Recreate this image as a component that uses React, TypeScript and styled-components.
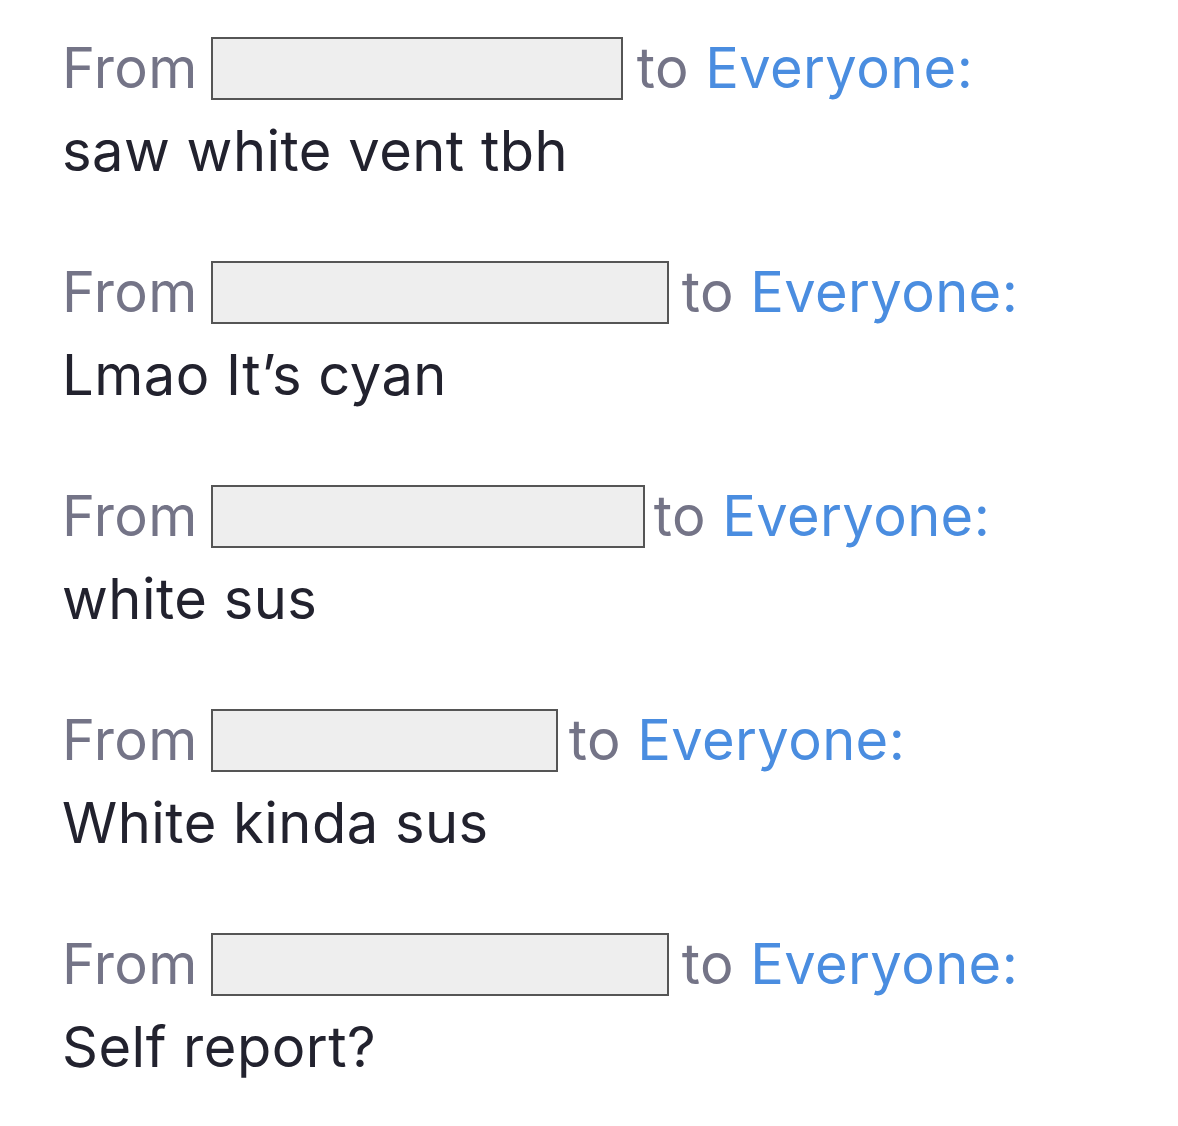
import React from "react";
import styled, { createGlobalStyle } from "styled-components";

const Global = createGlobalStyle`
  html, body { margin: 0; padding: 0; background: #ffffff; }
  body { font-family: Inter, "Noto Sans", "Liberation Sans", sans-serif; }
`;

const Feed = styled.div`
  display: flex;
  flex-direction: column;
  gap: 76px;
  padding: 36px 0 0 62px;
`;

const Message = styled.div`
  display: flex;
  flex-direction: column;
  gap: 18px;
`;

const Header = styled.div`
  display: flex;
  align-items: center;
  height: 64px;
  font-size: 56px;
  line-height: 64px;
  letter-spacing: 0.4px;
  white-space: nowrap;
`;

const From = styled.span`
  color: #747487;
  margin-right: 13px;
`;

const Redacted = styled.span<{ $w: number }>`
  display: inline-block;
  box-sizing: border-box;
  width: ${(p) => p.$w}px;
  height: 63px;
  background: #eeeeee;
  border: 2px solid #555555;
`;

const To = styled.span<{ $gap: number }>`
  color: #747487;
  margin-left: ${(p) => p.$gap}px;
`;

const Everyone = styled.span`
  color: #4a8de0;
`;

const Body = styled.div`
  font-size: 56px;
  line-height: 66px;
  letter-spacing: 0.5px;
  color: #22222e;
`;

const messages = [
  { w: 412, gap: 14, text: "saw white vent tbh" },
  { w: 458, gap: 13, text: "Lmao It\u2019s cyan" },
  { w: 434, gap: 9, text: "white sus" },
  { w: 347, gap: 11, text: "White kinda sus" },
  { w: 458, gap: 13, text: "Self report?" },
];

export default function App() {
  return (
    <>
      <Global />
      <Feed>
        {messages.map((m, i) => (
          <Message key={i}>
            <Header>
              <From>From</From>
              <Redacted $w={m.w} />
              <To $gap={m.gap}>
                to <Everyone>Everyone:</Everyone>
              </To>
            </Header>
            <Body>{m.text}</Body>
          </Message>
        ))}
      </Feed>
    </>
  );
}
